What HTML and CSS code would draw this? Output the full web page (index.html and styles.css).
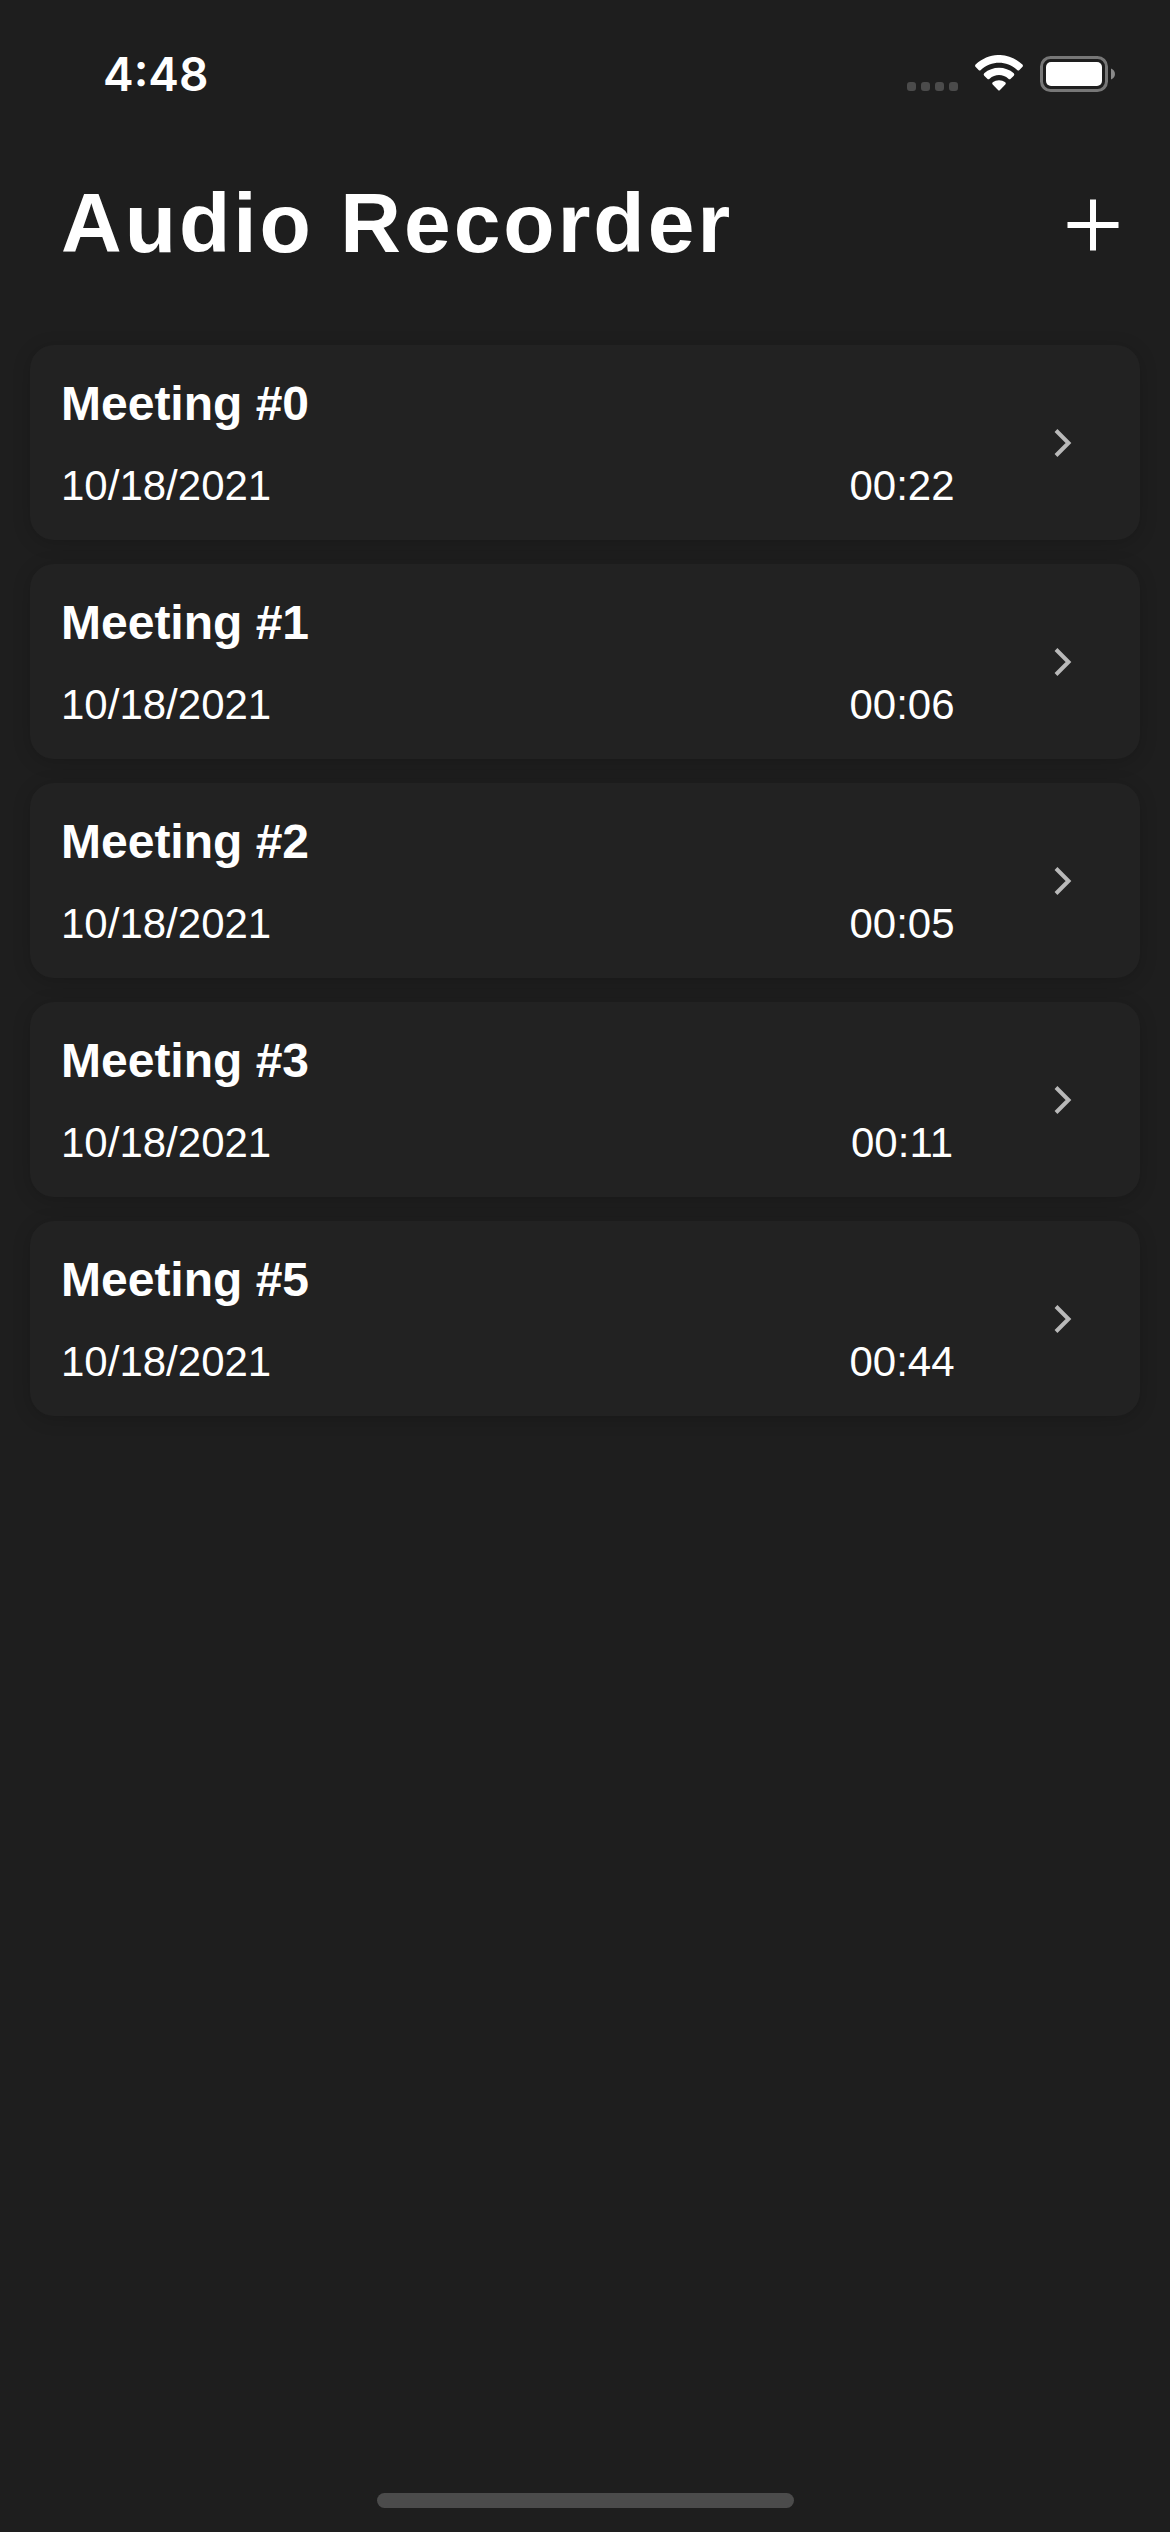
FILE: index.html
```html
<!DOCTYPE html>
<html lang="en">
<head>
<meta charset="utf-8">
<meta name="viewport" content="width=device-width, initial-scale=1">
<title>Audio Recorder</title>
<link rel="stylesheet" href="styles.css">
</head>
<body>
<div class="screen">
  <div class="status-bar">
    <time class="clock">4:48</time>
    <svg class="status-icons" width="210" height="38" viewBox="0 0 210 38" aria-hidden="true">
      <g fill="#4b4b4b">
        <rect x="0" y="27" width="9" height="9" rx="3"/>
        <rect x="14" y="27" width="9" height="9" rx="3"/>
        <rect x="28" y="27" width="9" height="9" rx="3"/>
        <rect x="42" y="27" width="9" height="9" rx="3"/>
      </g>
      <g fill="#fff">
        <path d="M68.6 9.5Q67.500 10.700 68.700 12L71.600 15Q72.600 16.100 73.800 15C84.500 5.300 99.500 5.300 110.200 15Q111.400 16.100 112.400 15L115.300 12Q116.500 10.700 115.400 9.500C101.500-3.200 82.500-3.200 68.600 9.500Z"/>
        <path d="M77.200 18.300Q76.100 19.500 77.200 20.700L80.300 23.700Q81.400 24.700 82.600 23.700C88 18.900 96 18.900 101.400 23.700Q102.600 24.700 103.700 23.700L106.800 20.700Q107.900 19.500 106.800 18.300C98.500 10.900 85.500 10.900 77.200 18.300Z"/>
        <path d="M85.700 27.200Q84.600 28.400 85.700 29.600L91 35Q92 36 93 35L98.300 29.600Q99.400 28.400 98.300 27.200C94.700 24.500 89.300 24.500 85.700 27.200Z"/>
      </g>
      <rect x="134.500" y="2.500" width="65" height="33" rx="9" fill="none" stroke="#777" stroke-width="3"/>
      <rect x="139" y="7" width="56" height="24" rx="5" fill="#fff"/>
      <path d="M204 13.500C209.300 15.500 209.300 22.500 204 24.500Z" fill="#8a8a8a"/>
    </svg>
  </div>

  <header class="header">
    <h1 class="title">Audio Recorder</h1>
    <button class="add" type="button" aria-label="New recording">
      <svg width="52" height="52" viewBox="0 0 52 52" aria-hidden="true"><path d="M26 0.500V51.500M0.500 26H51.500" stroke="#fff" stroke-width="6"/></svg>
    </button>
  </header>

  <main class="recordings">
    <a class="card" href="#meeting-0">
      <span class="name">Meeting #0</span>
      <span class="date">10/18/2021</span>
      <span class="duration">00:22</span>
      <svg class="chevron" width="18" height="28" viewBox="0 0 18 28" aria-hidden="true"><path d="M2 1.500L14.500 14L2 26.500"/></svg>
    </a>
    <a class="card" href="#meeting-1">
      <span class="name">Meeting #1</span>
      <span class="date">10/18/2021</span>
      <span class="duration">00:06</span>
      <svg class="chevron" width="18" height="28" viewBox="0 0 18 28" aria-hidden="true"><path d="M2 1.500L14.500 14L2 26.500"/></svg>
    </a>
    <a class="card" href="#meeting-2">
      <span class="name">Meeting #2</span>
      <span class="date">10/18/2021</span>
      <span class="duration">00:05</span>
      <svg class="chevron" width="18" height="28" viewBox="0 0 18 28" aria-hidden="true"><path d="M2 1.500L14.500 14L2 26.500"/></svg>
    </a>
    <a class="card" href="#meeting-3">
      <span class="name">Meeting #3</span>
      <span class="date">10/18/2021</span>
      <span class="duration">00:11</span>
      <svg class="chevron" width="18" height="28" viewBox="0 0 18 28" aria-hidden="true"><path d="M2 1.500L14.500 14L2 26.500"/></svg>
    </a>
    <a class="card" href="#meeting-5">
      <span class="name">Meeting #5</span>
      <span class="date">10/18/2021</span>
      <span class="duration">00:44</span>
      <svg class="chevron" width="18" height="28" viewBox="0 0 18 28" aria-hidden="true"><path d="M2 1.500L14.500 14L2 26.500"/></svg>
    </a>
  </main>

  <div class="home-indicator"></div>
</div>
</body>
</html>
```
FILE: styles.css
```css
* {
  box-sizing: border-box;
}

body {
  margin: 0;
  background: #1e1e1e;
  color: #fff;
  font-family: "Liberation Sans", Arial, sans-serif;
}

.screen {
  display: flex;
  flex-direction: column;
  min-height: 100vh;
  padding-bottom: 24px;
}

.status-bar {
  display: flex;
  align-items: center;
  justify-content: space-between;
  height: 148px;
  padding: 0 53px 0 103px;
}

.clock {
  font: 600 46px/48px Inter, sans-serif;
}

.header {
  display: flex;
  align-items: center;
  justify-content: space-between;
  padding: 27px 51px 0 61px;
}

.title {
  margin: 0;
  padding-bottom: 4px;
  font-size: 84px;
  line-height: 96px;
  letter-spacing: 3px;
}

.add {
  display: flex;
  padding: 0;
  border: 0;
  background: none;
  cursor: pointer;
}

.recordings {
  display: flex;
  flex-direction: column;
  gap: 24px;
  padding: 70px 30px 48px;
}

.card {
  display: grid;
  grid-template-columns: 1fr 178px 149px;
  row-gap: 30px;
  align-items: center;
  padding: 30px 0 30px 31px;
  border-radius: 24px;
  background: #222;
  box-shadow: 0 3px 18px rgba(0, 0, 0, 0.18);
  color: #fff;
  text-decoration: none;
}

.name {
  grid-column: 1 / 3;
  font-size: 48px;
  font-weight: 700;
  line-height: 57px;
}

.date,
.duration {
  font-size: 42px;
  line-height: 48px;
}

.duration {
  text-align: center;
}

.chevron {
  grid-row: 1 / 3;
  grid-column: 3;
  margin-left: 63px;
  fill: none;
  stroke: #b9b9b9;
  stroke-width: 4;
}

.home-indicator {
  width: 417px;
  max-width: 50%;
  height: 15px;
  margin: auto auto 0;
  border-radius: 8px;
  background: #4b4b4b;
}
```
